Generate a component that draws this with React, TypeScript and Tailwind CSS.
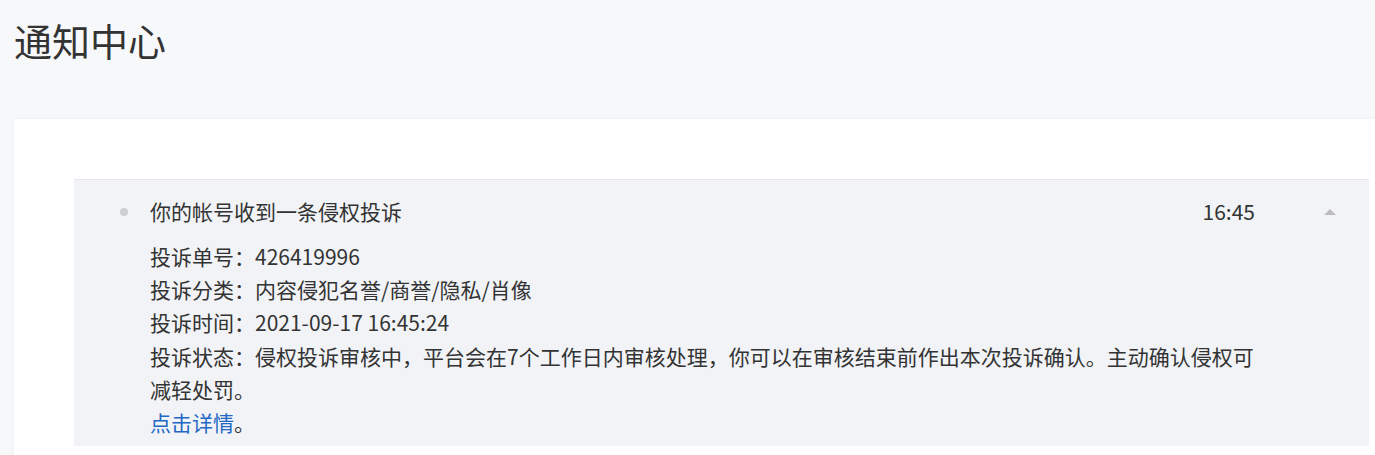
import React from "react";

const details: string[] = [
  "投诉单号：426419996",
  "投诉分类：内容侵犯名誉/商誉/隐私/肖像",
  "投诉时间：2021-09-17 16:45:24",
  "投诉状态：侵权投诉审核中，平台会在7个工作日内审核处理，你可以在审核结束前作出本次投诉确认。主动确认侵权可减轻处罚。",
];

function NoticeItem() {
  return (
    <div className="w-[1295px] border-t border-[#e5e6eb] bg-[#f2f3f7] pt-[15px] pb-[7px]">
      <div className="flex h-[33px] items-center">
        <div className="flex w-[76px] justify-end pr-[22px]">
          <span className="h-[8px] w-[8px] rounded-full bg-[#cdced2]" />
        </div>
        <div className="w-[1105px] text-[21px] leading-[33px] text-[#333]">
          <div className="flex justify-between">
            <span>你的帐号收到一条侵权投诉</span>
            <span>16:45</span>
          </div>
        </div>
        <div className="flex flex-1 justify-end pr-[33px]">
          <span className="h-0 w-0 border-x-[6px] border-b-[6px] border-x-transparent border-b-[#bcbcbc]" />
        </div>
      </div>
      <div className="mt-[12px] w-[1105px] pl-[76px] box-content text-[21px] leading-[33.2px] text-[#333]">
        {details.map((d) => (
          <div key={d}>{d}</div>
        ))}
        <div>
          <a className="text-[#2368c4]" href="#">
            点击详情
          </a>
          。
        </div>
      </div>
    </div>
  );
}

export default function App() {
  return (
    <div
      className="h-[455px] w-[1375px] overflow-hidden bg-[#f7f8fa]"
      style={{ fontFamily: '"Noto Sans CJK SC", "Noto Sans", sans-serif' }}
    >
      <h1 className="pl-[14px] pt-[16px] text-[38px] leading-[48px] font-normal text-[#333]">
        通知中心
      </h1>
      <div className="ml-[14px] mt-[55px] min-h-[400px] w-[1415px] rounded-[4px] bg-white pl-[60px] pt-[60px] shadow-[0_0_6px_rgba(0,0,0,0.04)]">
        <NoticeItem />
      </div>
    </div>
  );
}
